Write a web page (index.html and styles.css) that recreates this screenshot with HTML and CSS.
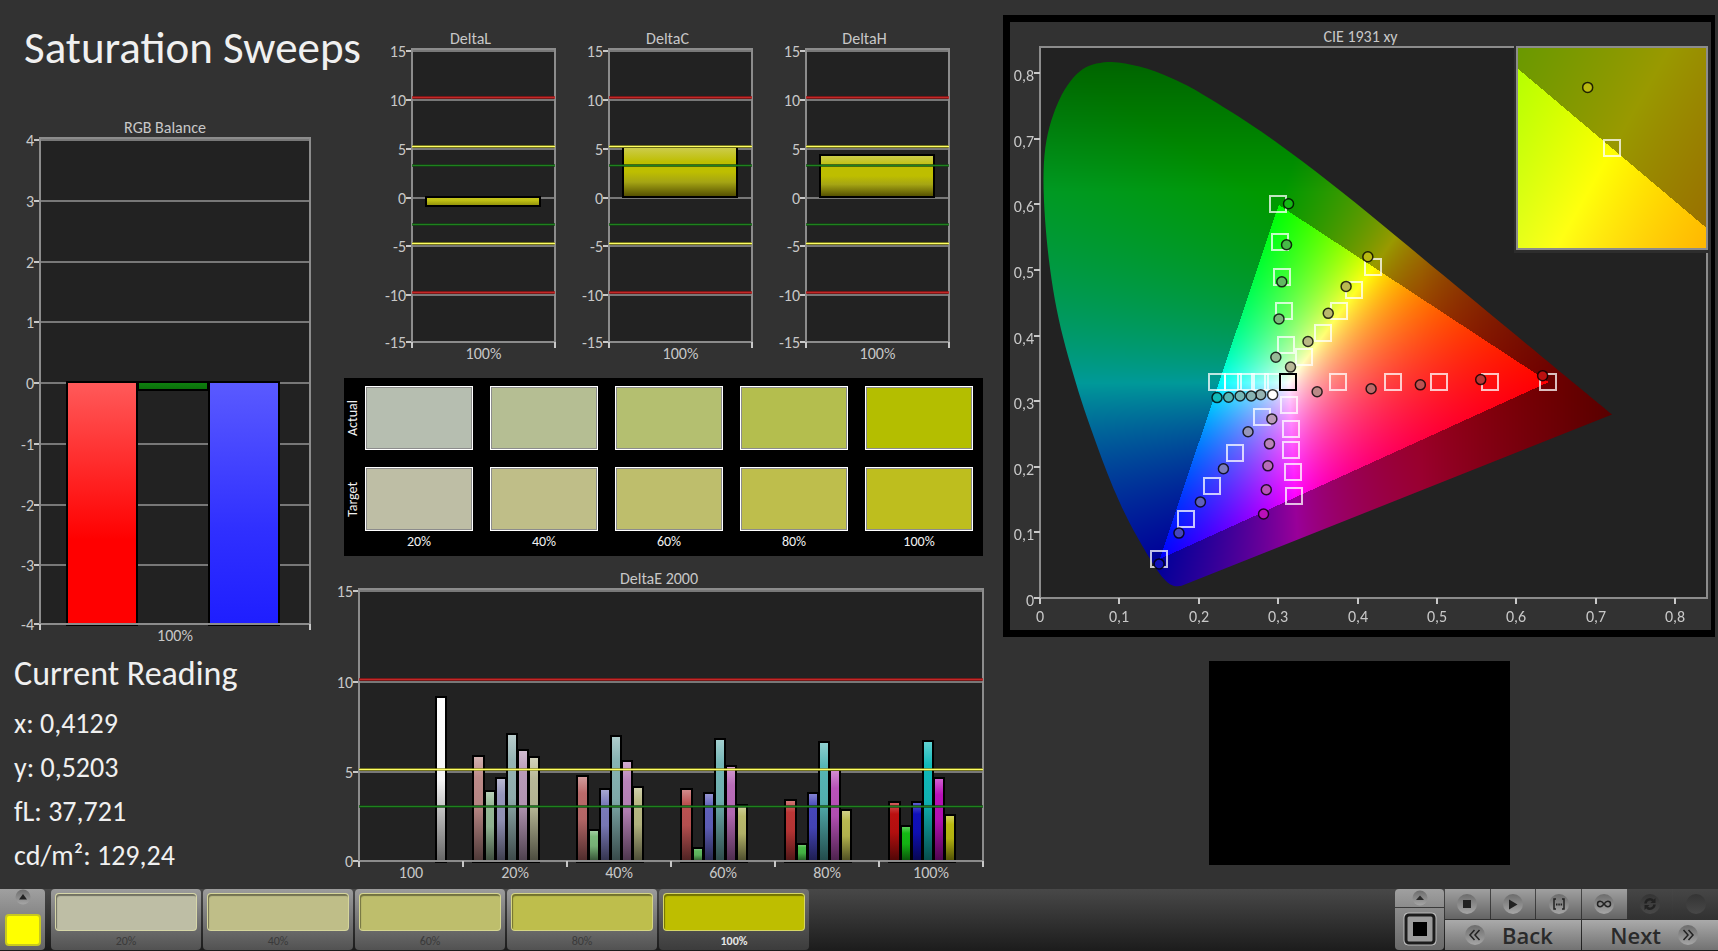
FILE: index.html
```html
<!DOCTYPE html>
<html lang="en">
<head>
    <meta charset="UTF-8">
    <meta name="viewport" content="width=device-width, initial-scale=1.0">
    <title>Saturation Sweeps</title>
    <link rel="stylesheet" href="styles.css">
</head>
<body>
    <main class="dashboard">
        <section class="column-left">
            <h1>Saturation Sweeps</h1>
            <figure class="chart chart-rgb">
                <figcaption>RGB Balance</figcaption>
                <div class="plot" id="rgb-balance"></div>
            </figure>
            <h2>Current Reading</h2>
            <ul class="readings">
                <li>x: 0,4129</li>
                <li>y: 0,5203</li>
                <li>fL: 37,721</li>
                <li>cd/m²: 129,24</li>
            </ul>
        </section>

        <section class="column-middle">
            <div class="delta-row">
                <figure class="chart chart-delta">
                    <figcaption>DeltaL</figcaption>
                    <div class="plot" id="delta-l"></div>
                </figure>
                <figure class="chart chart-delta">
                    <figcaption>DeltaC</figcaption>
                    <div class="plot" id="delta-c"></div>
                </figure>
                <figure class="chart chart-delta">
                    <figcaption>DeltaH</figcaption>
                    <div class="plot" id="delta-h"></div>
                </figure>
            </div>

            <div class="swatches">
                <span class="side-label">Actual</span>
                <div class="swatch actual-20"></div>
                <div class="swatch actual-40"></div>
                <div class="swatch actual-60"></div>
                <div class="swatch actual-80"></div>
                <div class="swatch actual-100"></div>
                <span class="side-label">Target</span>
                <div class="swatch target-20"></div>
                <div class="swatch target-40"></div>
                <div class="swatch target-60"></div>
                <div class="swatch target-80"></div>
                <div class="swatch target-100"></div>
                <span></span>
                <span class="level">20%</span>
                <span class="level">40%</span>
                <span class="level">60%</span>
                <span class="level">80%</span>
                <span class="level">100%</span>
            </div>

            <figure class="chart chart-delta-e">
                <figcaption>DeltaE 2000</figcaption>
                <div class="plot" id="delta-e"></div>
            </figure>
        </section>

        <section class="column-right">
            <figure class="chart chart-cie">
                <figcaption>CIE 1931 xy</figcaption>
                <div class="plot" id="cie"><canvas></canvas></div>
            </figure>
            <div class="pattern-window"></div>
        </section>
    </main>

    <footer class="toolbar">
        <button class="color-button" aria-label="Choose colour">
            <svg width="16" height="16" viewBox="0 0 16 16">
                <defs>
                    <linearGradient id="dimple" x1="0" y1="0" x2="0" y2="1">
                        <stop offset="0" stop-color="#6c6c6c"/>
                        <stop offset="1" stop-color="#a6a6a6"/>
                    </linearGradient>
                    <linearGradient id="dimple-off" x1="0" y1="0" x2="0" y2="1">
                        <stop offset="0" stop-color="#343434"/>
                        <stop offset="1" stop-color="#484848"/>
                    </linearGradient>
                </defs>
                <circle cx="8" cy="8" r="7.500" fill="url(#dimple)"/>
                <path d="M4 10.500L8 5l4 5.500z" fill="#222"/>
            </svg>
            <span class="color-current"></span>
        </button>
        <div class="levels">
            <button class="level-button"><span class="chip target-20"></span>20%</button>
            <button class="level-button"><span class="chip target-40"></span>40%</button>
            <button class="level-button"><span class="chip target-60"></span>60%</button>
            <button class="level-button"><span class="chip target-80"></span>80%</button>
            <button class="level-button selected"><span class="chip chip-100"></span>100%</button>
        </div>

        <div class="pattern-buttons">
            <button class="pattern-up" aria-label="Show patterns">
                <svg width="16" height="16" viewBox="0 0 16 16"><circle cx="8" cy="8" r="7.500" fill="url(#dimple)"/><path d="M4 10l4-4.500L12 10z" fill="#2a2a2a"/></svg>
            </button>
            <button class="pattern-current" aria-label="Window pattern">
                <svg width="34" height="34" viewBox="0 0 34 34">
                    <rect x="1" y="1" width="32" height="32" rx="4" fill="#a9a9a9" stroke="#b9b9b9"/>
                    <rect x="3" y="3" width="28" height="28" rx="3" fill="#9c9c9c" stroke="#1c1c1c" stroke-width="3"/>
                    <rect x="10" y="10" width="14" height="14" fill="#000"/>
                </svg>
            </button>
        </div>
        <div class="transport">
            <button aria-label="Stop">
                <svg class="icon" viewBox="0 0 20 20"><circle cx="10" cy="10" r="10"/><path class="ink" d="M6 6h8v8H6z"/></svg>
            </button>
            <button aria-label="Play">
                <svg class="icon" viewBox="0 0 20 20"><circle cx="10" cy="10" r="10"/><path class="ink" d="M6 5.500l8.500 5-8.500 5z"/></svg>
            </button>
            <button aria-label="Read series">
                <svg class="icon" viewBox="0 0 20 20"><circle cx="10" cy="10" r="10"/><path class="line" d="M7 5H5v10h2M13 5h2v10h-2"/><path class="ink" d="M7 9.500h1.500v2H7zM9.300 9.500h1.500v2H9.300zM11.600 9.500h1.500v2h-1.500z"/></svg>
            </button>
            <button aria-label="Read continuously">
                <svg class="icon" viewBox="0 0 20 20"><circle cx="10" cy="10" r="10"/><path class="line" d="M10 10C8.500 8 7.500 7.300 6.200 7.300a2.700 2.700 0 0 0 0 5.400C7.500 12.700 8.500 12 10 10s2.500-2.700 3.800-2.700a2.700 2.700 0 0 1 0 5.400C12.500 12.700 11.500 12 10 10z"/></svg>
            </button>
            <button disabled aria-label="Refresh">
                <svg class="icon" viewBox="0 0 20 20"><circle cx="10" cy="10" r="10"/><path class="bold-line" d="M5.500 9.500a4.500 4.500 0 0 1 7.500-3M14.500 10.500a4.500 4.500 0 0 1-7.500 3"/><path class="ink" d="M15.500 4v5h-5zM4.500 16v-5h5z"/></svg>
            </button>
            <button disabled aria-label="Record">
                <svg class="icon" viewBox="0 0 20 20"><circle cx="10" cy="10" r="10"/></svg>
            </button>
            <button class="nav-button">
                <svg class="icon" viewBox="0 0 20 20"><circle cx="10" cy="10" r="10"/><path class="line" d="M9.500 5L5 10l4.500 5M14.500 5L10 10l4.500 5"/></svg>
                Back
            </button>
            <button class="nav-button nav-next">
                Next
                <svg class="icon" viewBox="0 0 20 20"><circle cx="10" cy="10" r="10"/><path class="line" d="M5.500 5l4.500 5-4.500 5M10.500 5l4.500 5-4.500 5"/></svg>
            </button>
        </div>
    </footer>

    <script src="charts.js"></script>
</body>
</html>
```

FILE: styles.css
```css
* {
    box-sizing: border-box;
}

body {
    margin: 0;
    min-height: 100vh;
    display: flex;
    flex-direction: column;
    background-color: #323232;
    color: #f0f0f0;
    font-family: Calibri, Carlito, Lato, sans-serif;
}

h1, h2, ul, figure {
    margin: 0;
    padding: 0;
    font-weight: normal;
}

button {
    border: none;
    padding: 0;
    font-family: inherit;
    cursor: pointer;
}

.dashboard {
    flex: 1;
    display: grid;
    grid-template-columns: minmax(0, 335fr) minmax(0, 648fr) minmax(0, 735fr);
}

/* Charts */
.chart figcaption {
    font-size: 16px;
    line-height: 20px;
    text-align: center;
    color: #c8c8c8;
}

.plot {
    position: relative;
    background-color: #222222;
}

.plot svg {
    position: absolute;
    left: 0;
    top: 0;
    width: 100%;
    height: 100%;
    overflow: visible;
}

.plot canvas {
    display: block;
    width: 100%;
    height: 100%;
}

.plot text {
    font-size: 16px;
    fill: #c8c8c8;
}

.frame {
    fill: none;
    stroke: #8c8c8c;
    stroke-width: 2;
}

.grid {
    stroke: #787878;
    stroke-width: 2;
}

.tick {
    stroke: #c8c8c8;
    stroke-width: 2;
}

.bar {
    stroke: #000000;
    stroke-width: 2;
}

.limit-shade {
    stroke-width: 3;
    opacity: 0.7;
}

.limit {
    stroke-width: 1;
}

.target {
    fill: none;
    stroke: #ffffff;
    stroke-opacity: 0.75;
    stroke-width: 2;
}

.target-white {
    stroke: #000000;
    stroke-opacity: 1;
}

.reading {
    stroke: #000000;
    stroke-opacity: 0.8;
    stroke-width: 1.5;
}

/* Left column */
.column-left {
    padding: 18px 25px 0 40px;
}

h1 {
    margin-left: -16px;
    font-size: 45px;
    line-height: 60px;
    white-space: nowrap;
}

.chart-rgb {
    margin-top: 40px;
    margin-left: -20px;
    padding-bottom: 28px;
}

.chart-rgb .plot {
    height: 486px;
    margin-left: 20px;
}

h2 {
    margin-left: -26px;
    font-size: 34px;
    line-height: 44px;
}

.readings {
    margin: 6px 0 0 -26px;
    list-style: none;
    font-size: 28px;
    line-height: 44px;
}

/* Middle column */
.column-middle {
    padding-top: 29px;
}

.delta-row {
    display: flex;
    gap: 28px;
    padding: 0 34px 36px 51px;
}

.chart-delta {
    flex: 1;
}

.chart-delta .plot {
    height: 293px;
    margin-left: 26px;
}

.swatches {
    display: grid;
    grid-template-columns: 4px repeat(5, 1fr);
    grid-template-rows: 64px 64px 24px;
    column-gap: 17px;
    row-gap: 17px;
    margin-left: 9px;
    height: 178px;
    padding: 8px 10px 0 0;
    background-color: #000000;
}

.side-label {
    writing-mode: vertical-rl;
    transform: rotate(180deg);
    text-align: center;
    font-size: 14px;
    line-height: 18px;
    width: 18px;
}

.swatch {
    border: 1px solid #ffffff;
    box-shadow: inset 0 0 0 1px #8c8c8c;
}

.level {
    margin-top: -16px;
    text-align: center;
    font-size: 14px;
    line-height: 20px;
}

.actual-20 { background-color: #b6beb0; }
.actual-40 { background-color: #b5be93; }
.actual-60 { background-color: #b4bf70; }
.actual-80 { background-color: #b4be4e; }
.actual-100 { background-color: #b4be00; }
.target-20 { background-color: #bebea5; }
.target-40 { background-color: #bfbe88; }
.target-60 { background-color: #bebe6c; }
.target-80 { background-color: #bebe4c; }
.target-100 { background-color: #bebe1e; }

.chart-delta-e {
    margin-top: 13px;
    padding-bottom: 28px;
}

.chart-delta-e .plot {
    height: 272px;
    margin-left: 24px;
}

/* Right column */
.column-right {
    padding: 15px 3px 0 20px;
}

.chart-cie {
    padding: 5px 4px 32px 30px;
    border: 7px solid #000000;
    border-right-width: 4px;
}

.chart-cie figcaption {
    margin-left: -26px;
}

.chart-cie .plot {
    height: 551px;
}

.pattern-window {
    width: 301px;
    height: 204px;
    margin: 24px auto 0;
    background-color: #000000;
}

/* Toolbar */
.toolbar {
    display: flex;
    height: 62px;
    background: linear-gradient(#484848, #1c1c1c);
}

.toolbar button {
    background: linear-gradient(#a0a0a0, #646464);
}

.color-button {
    display: flex;
    flex-direction: column;
    align-items: center;
    gap: 9px;
    width: 45px;
    height: 61px;
    border-radius: 0 4px 4px 0;
}

.color-current {
    width: 36px;
    height: 32px;
    border: 2px solid #c8c81e;
    border-radius: 4px;
    background-color: #ffff00;
}

.levels {
    display: flex;
    gap: 2px;
    margin-left: 6px;
}

.toolbar .level-button {
    width: 150px;
    height: 61px;
    padding: 4px 4px 0;
    border-radius: 4px;
    background: linear-gradient(#9c9c9c, #525252);
    color: #3a3a3a;
    font-size: 12px;
    line-height: 20px;
}

.toolbar .selected {
    background: linear-gradient(#707070, #3c3c3c);
    color: #e6e6e6;
    font-weight: bold;
}

.chip {
    display: block;
    height: 38px;
    border: 1px solid rgba(230, 230, 170, 0.6);
    border-radius: 4px;
    box-shadow: inset 1px 2px 1px rgba(0, 0, 0, 0.4);
}

.chip-100 {
    background-color: #bebe00;
}

.pattern-buttons {
    display: flex;
    flex-direction: column;
    gap: 1px;
    width: 49px;
    margin-left: auto;
}

.pattern-up {
    height: 18px;
    border-radius: 4px 4px 0 0;
}

.pattern-current {
    height: 42px;
    border-radius: 0 0 4px 4px;
}

.toolbar .pattern-up {
    background: linear-gradient(#a0a0a0, #8c8c8c);
}

.toolbar .pattern-current {
    background: linear-gradient(#8c8c8c, #6a6a6a);
}

.pattern-buttons svg {
    display: block;
    margin: 0 auto;
}

.transport {
    display: grid;
    grid-template-columns: repeat(6, 1fr);
    grid-template-rows: 30px 30px;
    gap: 1px;
    width: 273px;
    margin-left: 1px;
}

.transport button {
    display: flex;
    align-items: center;
    justify-content: center;
    color: #2a2a2a;
}

.transport button:disabled {
    background: linear-gradient(#464646, #323232);
}

.transport .nav-button {
    grid-column: span 3;
    justify-content: flex-start;
    gap: 17px;
    padding: 0 20px;
    background: linear-gradient(#aaaaaa, #727272);
    font-family: "Open Sans", sans-serif;
    font-size: 22px;
    font-weight: 600;
}

.transport .nav-next {
    justify-content: flex-end;
}

.icon {
    width: 20px;
    height: 20px;
}

.icon circle {
    fill: url(#dimple);
}

button:disabled .icon circle {
    fill: url(#dimple-off);
}

.icon .ink {
    fill: #222222;
}

.icon .line,
.icon .bold-line {
    fill: none;
    stroke: #222222;
    stroke-width: 1.5;
}

.icon .bold-line {
    stroke-width: 2.5;
}
```

FILE: charts.js
```js
var SVG_NS = 'http://www.w3.org/2000/svg';
var gradientCount = 0;

function add(parent, tag, attrs, text) {
    var node = document.createElementNS(SVG_NS, tag);
    for (var key in attrs) {
        node.setAttribute(key, attrs[key]);
    }
    if (text !== undefined) {
        node.textContent = text;
    }
    parent.appendChild(node);
    return node;
}

function createSvg(plot) {
    var old = plot.querySelector('svg');
    if (old) {
        old.remove();
    }
    return add(plot, 'svg', {});
}

function line(svg, x1, y1, x2, y2, cls) {
    return add(svg, 'line', { x1: x1, y1: y1, x2: x2, y2: y2, 'class': cls });
}

// Vertical gradient from a list of [offset, color]
function gradient(svg, stops) {
    var id = 'fill' + gradientCount++;
    var node = add(svg, 'linearGradient', { id: id, x1: 0, y1: 0, x2: 0, y2: 1 });
    stops.forEach(function (stop) {
        add(node, 'stop', { offset: stop[0], 'stop-color': stop[1] });
    });
    return 'url(#' + id + ')';
}

// Lighten (amount > 0) or darken (amount < 0) a #rrggbb color
function shade(color, amount) {
    var to = amount > 0 ? 255 : 0;
    var k = Math.abs(amount);
    var parts = [1, 3, 5].map(function (i) {
        var c = parseInt(color.substr(i, 2), 16);
        return Math.round(c + (to - c) * k);
    });
    return 'rgb(' + parts.join(',') + ')';
}

function barStops(color) {
    return [[0, shade(color, 0.35)], [0.2, color], [0.5, shade(color, -0.05)], [1, shade(color, -0.6)]];
}

function limit(svg, y, width, color, bright) {
    line(svg, 0, y - 0.5, width, y - 0.5, 'limit-shade').setAttribute('stroke', color);
    line(svg, 0, y - 0.5, width, y - 0.5, 'limit').setAttribute('stroke', bright);
}

// Bar chart: groups of bars on a value axis
function barChart(id, options) {
    var plot = document.getElementById(id);
    var svg = createSvg(plot);
    var width = plot.clientWidth;
    var height = plot.clientHeight;
    var range = options.max - options.min;

    function yOf(v) {
        return Math.round((options.max - v) / range * height);
    }

    // Grid and value labels
    for (var v = options.min; v <= options.max; v += options.step) {
        var y = Math.min(yOf(v) + 2, height);
        line(svg, 0, y, width, y, 'grid');
        line(svg, -6, y, 0, y, 'tick');
        add(svg, 'text', { x: -6, y: y + 6, 'text-anchor': 'end' }, v);
    }

    // Frame
    add(svg, 'rect', { x: 0, y: 0, width: width, height: height, 'class': 'frame' });

    // Bars, kept inside the plot
    var groupWidth = width / options.groups.length;
    var slot = groupWidth * options.fill / options.slots;
    options.groups.forEach(function (group, g) {
        group.bars.forEach(function (bar, i) {
            if (!bar) {
                return;
            }
            var x = Math.round(groupWidth * (g + 0.1) + slot * i);
            var right = Math.round(groupWidth * (g + 0.1) + slot * (i + 1));
            var top = yOf(Math.max(bar.value, 0));
            var bottom = Math.min(yOf(Math.min(bar.value, 0)), height);
            add(svg, 'rect', {
                x: x, y: top + 1, width: right - x - 1, height: bottom - top,
                fill: gradient(svg, bar.stops), 'class': 'bar'
            });
        });
        add(svg, 'text', { x: groupWidth * (g + 0.5), y: height + 17, 'text-anchor': 'middle' }, group.label);
    });
    line(svg, 0, height, width, height, 'frame');
    for (var t = 0; t <= options.groups.length; t++) {
        line(svg, groupWidth * t, height, groupWidth * t, height + 6, 'tick');
    }

    (options.limits || []).forEach(function (l) {
        limit(svg, yOf(l[0]), width, l[1], l[2]);
    });
}

var RED = ['#a01414', '#c32828'];
var YELLOW = ['#96961e', '#ffff64'];
var GREEN = ['#144614', '#1e821e'];

// Series colors for R, G, B, C, M, Y at each saturation level
var COLORS = {
    20: ['#bc8a88', '#97b996', '#9696bb', '#96b4b4', '#b99ab9', '#b9b998'],
    40: ['#bb6a6a', '#7bb97b', '#7c7cbb', '#86b3b3', '#b983b9', '#b9b984'],
    60: ['#bb5252', '#60b960', '#6060bb', '#74b6b6', '#b96cb9', '#b9b96c'],
    80: ['#bb3636', '#46b946', '#4646bb', '#56b6b6', '#b952b9', '#b9b950'],
    100: ['#bb1010', '#14b914', '#1010bb', '#10b9b9', '#b910b9', '#b9b910']
};

var DELTA_E = {
    20: [5.87, 3.9, 4.65, 7.07, 6.2, 5.8],
    40: [4.73, 1.75, 4.0, 6.95, 5.55, 4.15],
    60: [4.0, 0.77, 3.82, 6.8, 5.3, 3.15],
    80: [3.4, 1.0, 3.82, 6.6, 5.07, 2.85],
    100: [3.33, 2.0, 3.33, 6.7, 4.65, 2.6]
};

function drawBalance() {
    barChart('rgb-balance', {
        min: -4, max: 4, step: 1, slots: 3, fill: 0.79,
        groups: [{
            label: '100%',
            bars: [
                { value: -4.2, stops: [[0, '#ff5a5a'], [0.65, '#ff0000'], [1, '#ff0000']] },
                { value: -0.13, stops: [[0, '#0f820f'], [1, '#0a6e0a']] },
                { value: -4.2, stops: [[0, '#5a5aff'], [0.6, '#3030ff'], [1, '#1e1eff']] }
            ]
        }]
    });
}

function drawDelta(id, value) {
    var stops = value < 0
        ? [[0, '#c8c81e'], [0.4, '#bebe14'], [1, '#8c8c0a']]
        : [[0, '#cdcd50'], [0.3, '#bebe00'], [0.5, '#bebe00'], [0.7, '#a5a514'], [1, '#504b00']];
    barChart(id, {
        min: -15, max: 15, step: 5, slots: 1, fill: 0.8,
        groups: [{ label: '100%', bars: [{ value: value, stops: stops }] }],
        limits: [
            [10, RED[0], RED[1]], [-10, RED[0], RED[1]],
            [5, YELLOW[0], YELLOW[1]], [-5, YELLOW[0], YELLOW[1]],
            [3, GREEN[0], GREEN[1]], [-3, GREEN[0], GREEN[1]]
        ]
    });
}

function drawDeltaE() {
    var white = { value: 9.1, stops: [[0, '#ffffff'], [0.5, '#f5f5f5'], [1, '#646464']] };
    var groups = [{ label: '100', bars: [null, null, null, null, null, null, white] }];
    [20, 40, 60, 80, 100].forEach(function (level) {
        groups.push({
            label: level + '%',
            bars: DELTA_E[level].map(function (value, i) {
                return { value: value, stops: barStops(COLORS[level][i]) };
            })
        });
    });
    barChart('delta-e', {
        min: 0, max: 15, step: 5, slots: 7, fill: 0.75, groups: groups,
        limits: [[10, RED[0], RED[1]], [5, YELLOW[0], YELLOW[1]], [3, GREEN[0], GREEN[1]]]
    });
}

// Spectral locus, 400 - 700 nm
var LOCUS = [
    [0.1784, 0.0187], [0.1755, 0.0182], [0.1706, 0.0179], [0.165, 0.0203], [0.159, 0.0257],
    [0.151, 0.0365], [0.1389, 0.0589], [0.1152, 0.109], [0.0957, 0.1584], [0.0728, 0.2292],
    [0.0453, 0.3275], [0.021, 0.4401], [0.0073, 0.5625], [0.0056, 0.6746], [0.0218, 0.7527],
    [0.0496, 0.8023], [0.0851, 0.817], [0.1252, 0.8102], [0.166, 0.7922], [0.2071, 0.7662],
    [0.2786, 0.7113], [0.3473, 0.6501], [0.4142, 0.5858], [0.479, 0.521], [0.5386, 0.4614],
    [0.59, 0.41], [0.6306, 0.3694], [0.6612, 0.3388], [0.6826, 0.3174], [0.7059, 0.2941], [0.7204, 0.2796]
];

var GAMUT_MAX = 0.84;

// Targets and readings as [x, y], ordered R, G, B, C, M, Y
var TARGETS = [
    [[0.375, 0.33], [0.444, 0.33], [0.502, 0.33], [0.567, 0.33], [0.64, 0.33]],
    [[0.31, 0.385], [0.307, 0.437], [0.305, 0.49], [0.302, 0.543], [0.3, 0.6]],
    [[0.28, 0.276], [0.246, 0.221], [0.2165, 0.1715], [0.184, 0.12], [0.15, 0.06]],
    [[0.294, 0.33], [0.277, 0.33], [0.26, 0.33], [0.243, 0.33], [0.223, 0.33]],
    [[0.313, 0.294], [0.3155, 0.258], [0.316, 0.226], [0.319, 0.192], [0.32, 0.156]],
    [[0.333, 0.367], [0.356, 0.404], [0.377, 0.437], [0.396, 0.469], [0.4193, 0.5053]]
];

var READINGS = [
    [[0.349, 0.3145], [0.417, 0.319], [0.479, 0.325], [0.555, 0.333], [0.633, 0.339]],
    [[0.297, 0.367], [0.301, 0.4255], [0.3045, 0.482], [0.3105, 0.5385], [0.313, 0.601]],
    [[0.262, 0.2535], [0.231, 0.197], [0.202, 0.1465], [0.175, 0.099], [0.15, 0.052]],
    [[0.278, 0.31], [0.266, 0.308], [0.252, 0.308], [0.2375, 0.306], [0.223, 0.3055]],
    [[0.292, 0.273], [0.289, 0.235], [0.287, 0.2015], [0.285, 0.165], [0.2815, 0.128]],
    [[0.3155, 0.352], [0.3375, 0.391], [0.363, 0.434], [0.3855, 0.475], [0.4129, 0.5203]]
];

// Display color for a chromaticity, dimmed outside the Rec. 709 triangle
function xyColor(x, y) {
    y = Math.max(y, 0.001);
    var X = x / y;
    var Z = (1 - x - y) / y;
    var r = 3.2406 * X - 1.5372 - 0.4986 * Z;
    var g = -0.9689 * X + 1.8758 + 0.0415 * Z;
    var b = 0.0557 * X - 0.204 + 1.057 * Z;
    var level = 255 / Math.max(r, g, b);
    if (r < 0 || g < 0 || b < 0) {
        var fade = Math.max(0, (y - 0.62) / 0.2) * 0.35 + Math.max(0, (x - 0.48) / 0.24) * 0.42;
        level *= 0.6 * (1 - Math.min(fade, 0.5));
    }
    return [Math.max(r, 0) * level, Math.max(g, 0) * level, Math.max(b, 0) * level];
}

// Fill a canvas with the chromaticities of a region
function paintRegion(canvas, width, height, x0, x1, y0, y1) {
    canvas.width = width;
    canvas.height = height;
    var ctx = canvas.getContext('2d');
    var image = ctx.createImageData(width, height);
    for (var j = 0; j < height; j++) {
        for (var i = 0; i < width; i++) {
            var c = xyColor(x0 + (x1 - x0) * i / width, y1 - (y1 - y0) * j / height);
            var p = (j * width + i) * 4;
            image.data[p] = c[0];
            image.data[p + 1] = c[1];
            image.data[p + 2] = c[2];
            image.data[p + 3] = 255;
        }
    }
    ctx.putImageData(image, 0, 0);
    return ctx;
}

function drawTarget(svg, x, y, cls) {
    x = Math.round(x);
    y = Math.round(y);
    add(svg, 'rect', { x: x - 8, y: y - 8, width: 16, height: 16, 'class': cls || 'target' });
}

function drawReading(svg, x, y, color) {
    add(svg, 'circle', { cx: x, cy: y, r: 5, fill: color, 'class': 'reading' });
}

function drawCie() {
    var plot = document.getElementById('cie');
    var canvas = plot.querySelector('canvas');
    var svg = createSvg(plot);
    var width = plot.clientWidth;
    var height = plot.clientHeight;

    function px(x) {
        return x / GAMUT_MAX * width;
    }

    function py(y) {
        return height - y / GAMUT_MAX * height;
    }

    // Horseshoe: keep only what lies inside the locus
    var ctx = paintRegion(canvas, width, height, 0, GAMUT_MAX, 0, GAMUT_MAX);
    ctx.globalCompositeOperation = 'destination-in';
    ctx.beginPath();
    ctx.moveTo(px(LOCUS[0][0]), py(LOCUS[0][1]));
    for (var i = 0; i < LOCUS.length - 1; i++) {
        var a = LOCUS[Math.max(i - 1, 0)];
        var b = LOCUS[i];
        var c = LOCUS[i + 1];
        var d = LOCUS[Math.min(i + 2, LOCUS.length - 1)];
        ctx.bezierCurveTo(
            px(b[0] + (c[0] - a[0]) / 6), py(b[1] + (c[1] - a[1]) / 6),
            px(c[0] - (d[0] - b[0]) / 6), py(c[1] - (d[1] - b[1]) / 6),
            px(c[0]), py(c[1])
        );
    }
    ctx.closePath();
    ctx.fill();
    ctx.globalCompositeOperation = 'source-over';

    // Axes
    add(svg, 'rect', { x: 0, y: 0, width: width, height: height, 'class': 'frame' });
    for (var n = 0; n <= 8; n++) {
        var v = n / 10;
        var label = String(v).replace('.', ',');
        var tickX = Math.round(px(v));
        var tickY = Math.round(py(v));
        line(svg, -6, tickY, 0, tickY, 'tick');
        line(svg, tickX, height, tickX, height + 6, 'tick');
        add(svg, 'text', { x: -6, y: tickY + 8, 'text-anchor': 'end' }, label);
        add(svg, 'text', { x: tickX, y: height + 24, 'text-anchor': 'middle' }, label);
    }

    TARGETS.forEach(function (series) {
        series.forEach(function (point) {
            drawTarget(svg, px(point[0]), py(point[1]));
        });
    });
    drawTarget(svg, px(0.3127), py(0.33), 'target target-white');

    var levels = [20, 40, 60, 80, 100];
    READINGS.forEach(function (series, s) {
        series.forEach(function (point, i) {
            drawReading(svg, px(point[0]), py(point[1]), COLORS[levels[i]][s]);
        });
    });
    drawReading(svg, px(0.293), py(0.31), '#ffffff');

    // Close-up of the selected point, 0.05 wide
    var w = Math.round(width * 0.285);
    var h = 202;
    var left = width - w;
    var closeUp = document.createElement('canvas');
    paintRegion(closeUp, w, h, 0.4193 - 0.025, 0.4193 + 0.025, 0.5053 - 0.025, 0.5053 + 0.025);
    ctx.drawImage(closeUp, left, 0);
    add(svg, 'rect', { x: left - 3, y: -1, width: 3, height: h + 4, fill: '#2d2d2d' });
    add(svg, 'rect', { x: left - 3, y: h, width: w + 5, height: 4, fill: '#2d2d2d' });
    add(svg, 'rect', { x: left, y: 0, width: w, height: h, 'class': 'frame' });
    drawTarget(svg, left + w / 2, h / 2);
    drawReading(svg, left + w / 2 - 0.0064 / 0.05 * w, h / 2 - 0.015 / 0.05 * h, '#b9b910');
}

function drawAll() {
    drawBalance();
    drawDelta('delta-l', -1);
    drawDelta('delta-c', 5.1);
    drawDelta('delta-h', 4.2);
    drawDeltaE();
    drawCie();
}

drawAll();
window.addEventListener('resize', drawAll);
```
